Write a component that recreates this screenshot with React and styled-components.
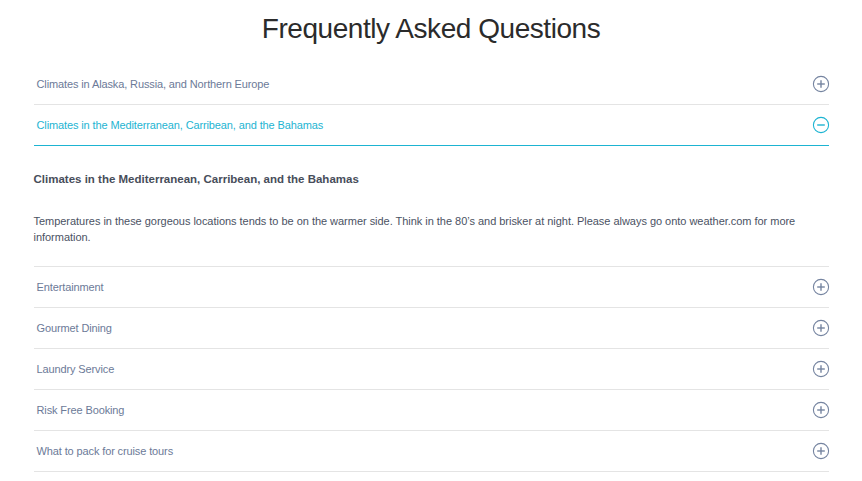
import React, { useState } from "react";
import styled, { createGlobalStyle } from "styled-components";

const Global = createGlobalStyle`
  html, body { margin: 0; padding: 0; background: #fff; }
  body { font-family: "Liberation Sans", Arial, sans-serif; }
`;

const Page = styled.div`
  width: 795px;
  margin: 0 auto;
  padding-top: 13px;
`;

const Title = styled.h1`
  margin: 0 0 19px;
  font-size: 28px;
  line-height: 32px;
  font-weight: 400;
  letter-spacing: -0.45px;
  color: #2b2b2b;
  text-align: center;
`;

const List = styled.div`
  display: flex;
  flex-direction: column;
`;

const Row = styled.button`
  display: flex;
  align-items: center;
  justify-content: space-between;
  height: 41px;
  padding: 1px 0 0 3px;
  margin: 0;
  background: none;
  border: none;
  border-bottom: 1px solid ${(p) => (p.$open ? "#1db4d2" : "#e4e4e4")};
  box-sizing: border-box;
  cursor: pointer;
  font-family: inherit;
  font-size: 11px;
  letter-spacing: -0.12px;
  color: ${(p) => (p.$open ? "#1db4d2" : "#6c7a98")};
  text-align: left;
  width: 100%;
`;

const Label = styled.span`
  margin-top: -2px;
`;

const Panel = styled.div`
  padding: 25px 0 21px;
  border-bottom: 1px solid #e4e4e4;
`;

const PanelTitle = styled.h3`
  margin: 0 0 26px;
  font-size: 11.5px;
  line-height: 16px;
  font-weight: 700;
  color: #474d5a;
`;

const PanelText = styled.p`
  margin: 0;
  font-size: 11px;
  line-height: 16px;
  letter-spacing: -0.03px;
  color: #4b5263;
`;

const Icon = ({ open, color }) => (
  <svg width="18" height="18" viewBox="0 0 18 18" style={{ marginRight: -1, marginTop: -2 }}>
    <circle cx="9" cy="9" r="7.6" fill="none" stroke={color} strokeWidth="1.1" />
    <line x1="5.2" y1="9" x2="12.8" y2="9" stroke={color} strokeWidth="1.4" />
    {!open && <line x1="9" y1="5.2" x2="9" y2="12.8" stroke={color} strokeWidth="1.4" />}
  </svg>
);

const items = [
  "Climates in Alaska, Russia, and Northern Europe",
  "Climates in the Mediterranean, Carribean, and the Bahamas",
  "Entertainment",
  "Gourmet Dining",
  "Laundry Service",
  "Risk Free Booking",
  "What to pack for cruise tours",
];

export default function App() {
  const [open, setOpen] = useState(1);
  return (
    <>
      <Global />
      <Page>
        <Title>Frequently Asked Questions</Title>
        <List>
          {items.map((t, i) => {
            const isOpen = open === i;
            return (
              <React.Fragment key={t}>
                <Row $open={isOpen} onClick={() => setOpen(isOpen ? -1 : i)}>
                  <Label>{t}</Label>
                  <Icon open={isOpen} color={isOpen ? "#1db4d2" : "#7584a0"} />
                </Row>
                {isOpen && i === 1 && (
                  <Panel>
                    <PanelTitle>{t}</PanelTitle>
                    <PanelText>
                      Temperatures in these gorgeous locations tends to be on the warmer side. Think in the
                      80’s and brisker at night. Please always go onto weather.com for more information.
                    </PanelText>
                  </Panel>
                )}
              </React.Fragment>
            );
          })}
        </List>
      </Page>
    </>
  );
}
